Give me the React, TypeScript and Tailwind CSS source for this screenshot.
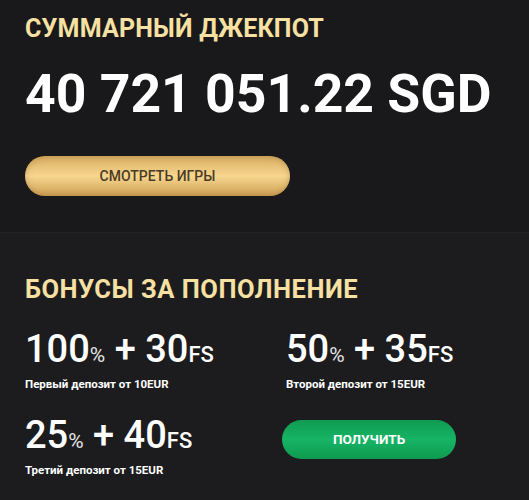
export default function App() {
  const bonuses = [
    { pct: "100", fs: "30", note: "Первый депозит от 10EUR" },
    { pct: "50", fs: "35", note: "Второй депозит от 15EUR" },
    { pct: "25", fs: "40", note: "Третий депозит от 15EUR" },
  ];

  return (
    <div
      className="w-[529px] h-[500px] bg-[#1c1c1e] text-white overflow-hidden"
      style={{ fontFamily: "Roboto, 'Noto Sans', sans-serif" }}
    >
      <div className="bg-[#19191b] h-[233px] px-[25px] pt-[14px] border-b border-[#222224]">
        <h2 className="text-[25px] leading-[30px] font-bold text-[#f6e0a2] tracking-[0.2px]">
          СУММАРНЫЙ ДЖЕКПОТ
        </h2>
        <div className="mt-[22px] text-[53.5px] leading-[56px] font-bold whitespace-nowrap">
          40 721 051.22 SGD
        </div>
        <button className="mt-[34px] w-[265px] h-[40px] rounded-full bg-gradient-to-b from-[#d6ad62] via-[#f8d68e] to-[#cda055] text-[#4a3c26] text-[14px] font-medium uppercase shadow-[inset_0_0_6px_rgba(120,80,20,0.35)]">
          Смотреть игры
        </button>
      </div>

      <div className="px-[25px] pt-[41px]">
        <h2 className="text-[25.5px] leading-[30px] font-bold text-[#f6e0a2] tracking-[0.5px]">
          БОНУСЫ ЗА ПОПОЛНЕНИЕ
        </h2>
        <div className="mt-[26px] grid grid-cols-[261px_1fr] gap-y-[25px]">
          {bonuses.map((b) => (
            <div key={b.note}>
              <div className="font-medium leading-[38px] whitespace-nowrap">
                <span className="text-[38px]">{b.pct}</span>
                <span className="text-[21px] font-normal text-[#e4e4e4]">%</span>
                <span className="text-[38px]"> + {b.fs}</span>
                <span className="text-[22px]">FS</span>
              </div>
              <div className="text-[11.5px] font-bold leading-[14px] mt-[1px]">{b.note}</div>
            </div>
          ))}
          <div className="pt-[4px]">
            <button className="w-[174px] h-[39px] -ml-[4px] rounded-full bg-gradient-to-b from-[#0f9b50] via-[#17b466] to-[#0e9a4e] text-white text-[13.5px] font-bold">
              ПОЛУЧИТЬ
            </button>
          </div>
        </div>
      </div>
    </div>
  );
}
